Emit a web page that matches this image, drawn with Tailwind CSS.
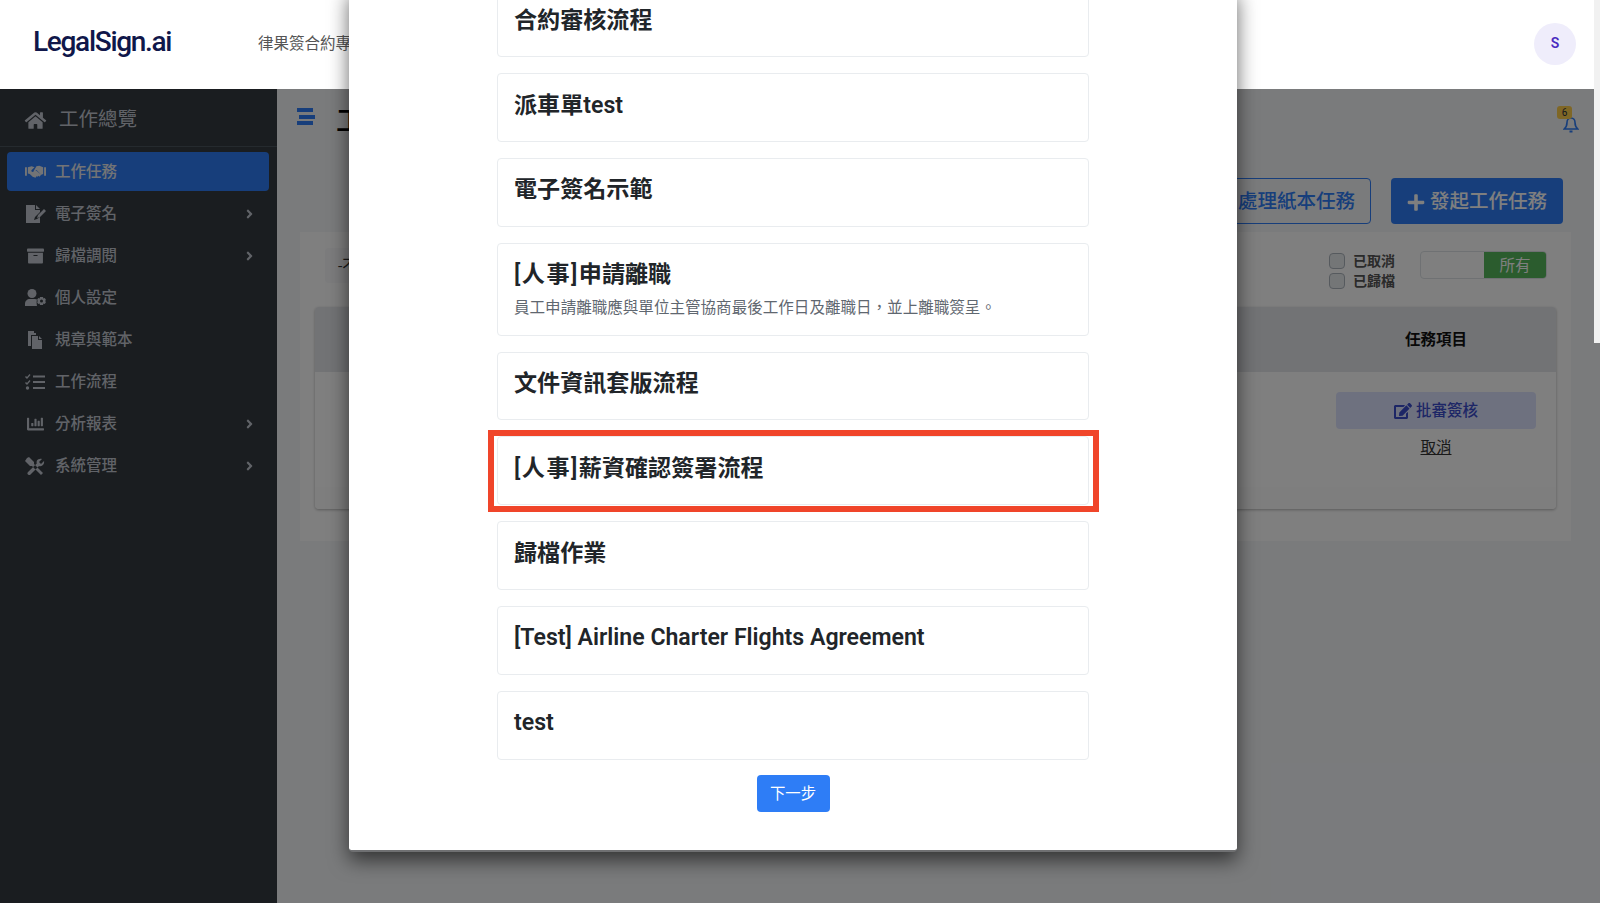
<!doctype html>
<html>
<head>
<meta charset="utf-8"/>
<meta name="viewport" content="width=device-width, initial-scale=1.0">
<title>LegalSign.ai</title>
<script src="https://cdn.jsdelivr.net/npm/@tailwindcss/browser@4"></script>
</head>
<body>
<div class="relative h-[903px] w-[1600px] overflow-hidden bg-white font-['Roboto','Noto_Sans_CJK_TC',sans-serif] text-[15.5px]">

	<!-- top bar stays above the backdrop -->
	<header class="relative z-20 flex h-[89px] items-center bg-white pr-[24px] pb-[2px] pl-[33px]">
		<div class="mb-[3px] w-[225px] text-[28px] leading-none font-medium tracking-[-1.3px] text-[#10174a]">LegalSign.ai</div>
		<div class="mt-[2px] text-[15.5px] whitespace-nowrap text-[#555]">律果簽合約專業版</div>
		<div class="ml-auto flex h-[42px] w-[42px] items-center justify-center rounded-full bg-[#efedfb] text-[14px] font-semibold text-[#4a2bc0]">S</div>
	</header>

	<div class="flex h-[814px]">
		<!-- sidebar -->
		<aside class="w-[277px] shrink-0 bg-[#343a40] font-medium text-[#c2c7d0]">
			<div class="flex h-[58px] items-center gap-[12px] border-b border-[#4b545c] pt-[5px] pl-[24px] text-[19.5px] font-normal">
				<svg class="h-[19px] w-[23px]" viewBox="0 0 576 512" fill="currentColor"><path d="M280.37 148.26L96 300.11V464a16 16 0 0 0 16 16l112.06-.29a16 16 0 0 0 15.92-16V368a16 16 0 0 1 16-16h64a16 16 0 0 1 16 16v95.64a16 16 0 0 0 16 16.05L464 480a16 16 0 0 0 16-16V300L295.67 148.26a12.19 12.19 0 0 0-15.3 0zM571.6 251.47L488 182.56V44.05a12 12 0 0 0-12-12h-56a12 12 0 0 0-12 12v72.61L318.47 43a48 48 0 0 0-61 0L4.34 251.47a12 12 0 0 0-1.6 16.9l25.5 31A12 12 0 0 0 45.15 301l235.22-193.74a12.19 12.19 0 0 1 15.3 0L530.9 301a12 12 0 0 0 16.9-1.6l25.5-31a12 12 0 0 0-1.7-16.93z"/></svg>
				<span>工作總覽</span>
			</div>
			<nav class="flex flex-col gap-[3px] pt-[5px] pr-[8px] pl-[7px]">
				<div class="flex h-[39px] items-center rounded-[4px] bg-[#2e7df6] pl-[18px] text-[#e6e8ec]">
					<svg class="mr-[9px] h-[16px] w-[21px]" viewBox="0 0 22 16" fill="currentColor"><path d="M0 3h2v9H0zM20 3h2v9h-2zM3 3l4-1 3 1-3 3c-1 1 0 2 1 2l3-2 6 5-1 1-1 1-1-1-1 1-1-.5-1 1.500-3-1-3-3-2-.5zM12 2l3-.5 4 1.500v7l-2 1-5-5-3 2 0-1z"/></svg>
					<span class="pt-[2px]">工作任務</span>
				</div>
				<div class="flex h-[39px] items-center pl-[18px]">
					<svg class="mr-[9px] h-[18px] w-[21px]" viewBox="0 0 21 18" fill="currentColor"><path d="M1 0h9v5h5v2l-5 5-1 3 3-1 3-2v6H1zM11 0l4 4h-4zM13 10l6-6 2 2-6 6-3 1z"/></svg>
					<span class="pt-[2px]">電子簽名</span>
					<svg class="mr-[16px] ml-auto h-[14px] w-[7px]" viewBox="0 0 256 512" fill="currentColor"><path d="M224.3 273l-136 136c-9.4 9.4-24.6 9.4-33.9 0l-22.6-22.6c-9.4-9.4-9.4-24.6 0-33.9l96.4-96.4-96.4-96.4c-9.4-9.4-9.4-24.6 0-33.9L54.3 103c9.4-9.4 24.6-9.4 33.9 0l136 136c9.5 9.4 9.5 24.6.1 34z"/></svg>
				</div>
				<div class="flex h-[39px] items-center pl-[18px]">
					<svg class="mr-[9px] h-[18px] w-[21px] px-[2px]" viewBox="0 0 512 512" fill="currentColor"><path d="M32 448c0 17.7 14.3 32 32 32h384c17.7 0 32-14.3 32-32V160H32v288zm160-212c0-6.6 5.4-12 12-12h104c6.6 0 12 5.4 12 12v8c0 6.6-5.400 12-12 12H204c-6.600 0-12-5.400-12-12v-8zM480 32H32C14.300 32 0 46.300 0 64v48c0 8.800 7.200 16 16 16h480c8.800 0 16-7.200 16-16V64c0-17.700-14.300-32-32-32z"/></svg>
					<span class="pt-[2px]">歸檔調閱</span>
					<svg class="mr-[16px] ml-auto h-[14px] w-[7px]" viewBox="0 0 256 512" fill="currentColor"><path d="M224.3 273l-136 136c-9.4 9.4-24.6 9.4-33.9 0l-22.6-22.6c-9.4-9.4-9.4-24.6 0-33.9l96.4-96.4-96.4-96.4c-9.4-9.4-9.4-24.6 0-33.9L54.3 103c9.4-9.4 24.6-9.4 33.9 0l136 136c9.5 9.4 9.5 24.6.1 34z"/></svg>
				</div>
				<div class="flex h-[39px] items-center pl-[18px]">
					<svg class="mr-[9px] h-[17px] w-[21px]" viewBox="0 0 21 17" fill="currentColor"><circle cx="7" cy="4.500" r="4.500"/><path d="M0 17v-2c0-3 2-5 5-5h5c.8 0 1.500.2 2 .5-.5 1.500-.5 4.500 0 6.500z"/><path fill-rule="evenodd" d="M15 8h3l.4 1.500 1.400-.5 1.200 2-1 1 1 1-1.200 2-1.400-.5L18 16h-3l-.4-1.500-1.400.5-1.200-2 1-1-1-1 1.200-2 1.400.5zM16.500 10.500a1.500 1.500 0 1 0 0 3 1.500 1.500 0 0 0 0-3z"/></svg>
					<span class="pt-[2px]">個人設定</span>
				</div>
				<div class="flex h-[39px] items-center pl-[18px]">
					<svg class="mr-[9px] h-[18px] w-[21px]" viewBox="0 0 21 18" fill="currentColor"><path d="M3 0h6v2h2v2H6v11H3zM7 5h6v4h4v9H7zM14 5l3 3h-3z"/></svg>
					<span class="pt-[2px]">規章與範本</span>
				</div>
				<div class="flex h-[39px] items-center pl-[18px]">
					<svg class="mr-[9px] h-[16px] w-[21px]" viewBox="0 0 21 16" fill="currentColor"><path d="M8 1.500h12v2H8zM8 7h12v2H8zM8 13h12v2H8zM2 3l2.500-3 1 1-3.500 4-2-2 1-1zM2 9l2.500-3 1 1-3.500 4-2-2 1-1z"/><circle cx="2.500" cy="14" r="1.700"/></svg>
					<span class="pt-[2px]">工作流程</span>
				</div>
				<div class="flex h-[39px] items-center pl-[18px]">
					<svg class="mr-[9px] h-[18px] w-[21px] px-[2px]" viewBox="0 0 512 512" fill="currentColor"><path d="M332.800 320h38.400c6.400 0 12.800-6.400 12.800-12.800V172.800c0-6.400-6.400-12.800-12.800-12.800h-38.400c-6.400 0-12.800 6.400-12.800 12.800v134.400c0 6.400 6.400 12.800 12.800 12.800zm96 0h38.400c6.400 0 12.800-6.400 12.800-12.800V76.800c0-6.400-6.400-12.800-12.800-12.800h-38.400c-6.400 0-12.800 6.400-12.800 12.800v230.400c0 6.400 6.400 12.800 12.800 12.800zm-288 0h38.400c6.400 0 12.800-6.400 12.800-12.800v-70.400c0-6.400-6.400-12.800-12.800-12.800h-38.400c-6.400 0-12.800 6.400-12.800 12.800v70.400c0 6.400 6.400 12.800 12.800 12.800zm96 0h38.400c6.400 0 12.800-6.400 12.800-12.800V108.800c0-6.400-6.400-12.800-12.800-12.800h-38.400c-6.400 0-12.800 6.400-12.800 12.800v198.400c0 6.400 6.400 12.800 12.800 12.800zM496 384H64V80c0-8.840-7.160-16-16-16H16C7.160 64 0 71.160 0 80v336c0 17.670 14.330 32 32 32h464c8.840 0 16-7.160 16-16v-32c0-8.840-7.160-16-16-16z"/></svg>
					<span class="pt-[2px]">分析報表</span>
					<svg class="mr-[16px] ml-auto h-[14px] w-[7px]" viewBox="0 0 256 512" fill="currentColor"><path d="M224.3 273l-136 136c-9.4 9.4-24.6 9.4-33.9 0l-22.6-22.6c-9.4-9.4-9.4-24.6 0-33.9l96.4-96.4-96.4-96.4c-9.4-9.4-9.4-24.6 0-33.9L54.3 103c9.4-9.4 24.6-9.4 33.9 0l136 136c9.5 9.4 9.5 24.6.1 34z"/></svg>
				</div>
				<div class="flex h-[39px] items-center pl-[18px]">
					<svg class="mr-[9px] h-[18px] w-[21px]" viewBox="0 0 21 18" fill="currentColor"><path d="M2 1l2-1 5 5 0 2 9 9-2 2-9-9-2 0-5-5zM19 4l-3 3-2-2 3-3c-2-.8-4 0-5 1.500-.5 1-.5 2-.2 3L3 15c-.8.8-.8 2 0 2.500.8.800 2 .800 2.500 0L14 9c1 .3 2 .3 3-.2C18.500 8 19.500 6 19 4z"/></svg>
					<span class="pt-[2px]">系統管理</span>
					<svg class="mr-[16px] ml-auto h-[14px] w-[7px]" viewBox="0 0 256 512" fill="currentColor"><path d="M224.3 273l-136 136c-9.4 9.4-24.6 9.4-33.9 0l-22.6-22.6c-9.4-9.4-9.4-24.6 0-33.9l96.4-96.4-96.4-96.4c-9.4-9.4-9.4-24.6 0-33.9L54.3 103c9.4-9.4 24.6-9.4 33.9 0l136 136c9.5 9.4 9.5 24.6.1 34z"/></svg>
				</div>
			</nav>
		</aside>

		<!-- page behind the dialog -->
		<main class="flex min-w-0 flex-1 flex-col bg-[#f4f6f9] pr-[29px] pl-[23px]">
			<div class="flex h-[89px] items-start pt-[19px]">
				<div class="-ml-[3px] flex w-[39px] flex-col gap-[2.500px]">
					<span class="h-[4px] w-[16px] bg-[#2e7df6]"></span>
					<span class="ml-[2px] h-[4px] w-[16px] bg-[#2e7df6]"></span>
					<span class="h-[4px] w-[16px] bg-[#2e7df6]"></span>
				</div>
				<div class="-mt-[4px] text-[28px] leading-[36px] font-medium text-black">工作任務</div>
				<div class="relative mt-[8px] mr-[-8px] ml-auto h-[18px] w-[20px] text-[#2e7df6]">
					<svg class="absolute top-0 left-[4px] h-[18px] w-[16px]" viewBox="0 0 16 18" fill="none" stroke="currentColor" stroke-width="1.600"><path d="M8 2c-2.500 0-4 2-4 4.500 0 3-1 5-2.800 6.500h13.600C13 11.500 12 9.500 12 6.500 12 4 10.500 2 8 2z"/><path d="M6.500 15.500h3" stroke-width="2"/></svg>
					<span class="absolute -top-[10px] -left-[2px] flex h-[13px] w-[15px] items-center justify-center rounded-[3px] bg-[#ffcf4d] text-[10px] text-[#1f2d3d]">6</span>
				</div>
			</div>

			<div class="flex h-[46px] justify-end gap-[20px] pr-[8px]">
				<button class="rounded-[4px] border-[1.500px] border-[#2e7df6] bg-transparent px-[15px] pt-[2px] text-[19.500px] font-medium text-[#2e7df6]">處理紙本任務</button>
				<button class="flex w-[172px] items-center justify-center gap-[5px] rounded-[4px] bg-[#2e7df6] pt-[2px] text-[19.500px] font-medium text-white">
					<svg class="h-[19px] w-[18px]" viewBox="0 0 448 512" fill="currentColor"><path d="M416 208H272V64c0-17.670-14.330-32-32-32h-32c-17.670 0-32 14.330-32 32v144H32c-17.670 0-32 14.330-32 32v32c0 17.670 14.330 32 32 32h144v144c0 17.670 14.330 32 32 32h32c17.670 0 32-14.330 32-32V304h144c17.670 0 32-14.330 32-32v-32c0-17.670-14.330-32-32-32z"/></svg>
					<span>發起工作任務</span>
				</button>
			</div>

			<section class="mt-[8px] h-[309px] bg-white px-[15px]">
				<div class="flex h-[75px] items-start">
					<div class="mt-[16px] ml-[10px] flex h-[35px] w-[180px] items-center rounded-[4px] bg-[#f8f9fa] pt-[2px] pl-[13px] text-[#333]">-不限-</div>
					<div class="mt-[21px] ml-auto flex flex-col gap-[4px] text-[14px] leading-[16px] font-semibold text-[#555]">
						<label class="flex items-center gap-[8px]"><span class="h-[16px] w-[16px] rounded-[4px] border border-[#adb5bd] bg-[#e9ecef]"></span>已取消</label>
						<label class="flex items-center gap-[8px]"><span class="h-[16px] w-[16px] rounded-[4px] border border-[#adb5bd] bg-[#e9ecef]"></span>已歸檔</label>
					</div>
					<div class="mt-[19px] mr-[9px] ml-[25px] flex h-[28px] w-[127px] overflow-hidden rounded-[4px] border border-[#dee2e6] bg-white">
						<span class="flex-1"></span>
						<span class="flex w-[62px] items-center justify-center bg-[#56b85c] pt-[4px] text-white">所有</span>
					</div>
				</div>
				<div class="flex h-[202px] flex-col overflow-hidden rounded-[4px] bg-white shadow-[0_1px_3px_rgba(0,0,0,0.3)]">
					<div class="flex h-[65px] items-center justify-end bg-[#e4e6ea] pt-[2px]">
						<span class="w-[240px] text-center font-bold text-[#111]">任務項目</span>
					</div>
					<div class="flex flex-1 justify-end">
						<div class="flex w-[240px] flex-col items-center pt-[20px]">
							<button class="flex h-[37px] w-[200px] items-center justify-center gap-[4px] rounded-[4px] bg-[#dde3ff] font-medium text-[#3a4ccc]">
								<svg class="h-[16px] w-[18px]" viewBox="0 0 576 512" fill="currentColor"><path d="M402.600 83.200l90.200 90.200c3.800 3.800 3.800 10 0 13.800L274.400 405.600l-92.800 10.300c-12.400 1.400-22.900-9.100-21.500-21.500l10.300-92.800L388.800 83.200c3.800-3.800 10-3.800 13.800 0zm162-22.900l-48.800-48.800c-15.200-15.200-39.900-15.200-55.200 0l-35.400 35.400c-3.800 3.800-3.800 10 0 13.800l90.200 90.200c3.800 3.800 10 3.800 13.800 0l35.400-35.400c15.200-15.300 15.200-40 0-55.200zM384 346.200V448H64V128h229.800c3.200 0 6.200-1.300 8.500-3.500l40-40c7.600-7.600 2.200-20.500-8.500-20.500H48C21.500 64 0 85.500 0 112v352c0 26.500 21.500 48 48 48h352c26.500 0 48-21.500 48-48V306.200c0-10.700-12.900-16-20.500-8.500l-40 40c-2.200 2.300-3.500 5.300-3.500 8.500z"/></svg>
								<span class="pt-[2px]">批審簽核</span>
							</button>
							<a class="mt-[8px] text-[#333] underline">取消</a>
						</div>
					</div>
					<div class="h-[22px] bg-[#fcfcfc]"></div>
				</div>
			</section>
		</main>
	</div>

	<!-- backdrop -->
	<div class="absolute inset-0 z-10 bg-black/50"></div>

	<!-- dialog, taller than the window so its top is cut off -->
	<div class="absolute bottom-[51px] left-[349px] z-30 flex w-[888px] flex-col items-center rounded-b-[4px] border-b-2 border-[#6f7072] bg-white pb-[38px] shadow-[0_8px_20px_rgba(0,0,0,0.6)]">
		<div class="flex w-[592px] flex-col gap-[16px] text-[#212529]">
			<div class="rounded-[4px] border-[1.500px] border-[#e9ecef] px-[16px] pt-[18.500px] pb-[14.500px]"><h5 class="mb-[7px] text-[23.100px] leading-[26.800px] font-semibold">合約審核流程</h5></div>
			<div class="rounded-[4px] border-[1.500px] border-[#e9ecef] px-[16px] pt-[18.500px] pb-[14.500px]"><h5 class="mb-[7px] text-[23.100px] leading-[26.800px] font-semibold">派車單test</h5></div>
			<div class="rounded-[4px] border-[1.500px] border-[#e9ecef] px-[16px] pt-[18.500px] pb-[14.500px]"><h5 class="mb-[7px] text-[23.100px] leading-[26.800px] font-semibold">電子簽名示範</h5></div>
			<div class="rounded-[4px] border-[1.500px] border-[#e9ecef] px-[16px] pt-[18.500px] pb-[14.500px]">
				<h5 class="mb-[7px] text-[23.100px] leading-[26.800px] font-semibold"><span class="tracking-[1.500px]">[人事]</span>申請離職</h5>
				<p class="text-[15.550px] leading-[24px] text-[#5f6770]">員工申請離職應與單位主管協商最後工作日及離職日，並上離職簽呈。</p>
			</div>
			<div class="rounded-[4px] border-[1.500px] border-[#e9ecef] px-[16px] pt-[18.500px] pb-[14.500px]"><h5 class="mb-[7px] text-[23.100px] leading-[26.800px] font-semibold">文件資訊套版流程</h5></div>
			<div class="relative rounded-[4px] border-[1.500px] border-[#e9ecef] px-[16px] pt-[18.500px] pb-[14.500px]">
				<h5 class="mb-[7px] text-[23.100px] leading-[26.800px] font-semibold"><span class="tracking-[1.500px]">[人事]</span>薪資確認簽署流程</h5>
				<span class="absolute -top-[7px] -right-[11px] -bottom-[8px] -left-[10px] border-[6px] border-[#f0452a]"></span>
			</div>
			<div class="rounded-[4px] border-[1.500px] border-[#e9ecef] px-[16px] pt-[18.500px] pb-[14.500px]"><h5 class="mb-[7px] text-[23.100px] leading-[26.800px] font-semibold">歸檔作業</h5></div>
			<div class="rounded-[4px] border-[1.500px] border-[#e9ecef] px-[16px] pt-[18.500px] pb-[14.500px]"><h5 class="mb-[7px] text-[23.100px] leading-[26.800px] font-semibold">[Test] Airline Charter Flights Agreement</h5></div>
			<div class="rounded-[4px] border-[1.500px] border-[#e9ecef] px-[16px] pt-[18.500px] pb-[14.500px]"><h5 class="mb-[7px] text-[23.100px] leading-[26.800px] font-semibold">test</h5></div>
		</div>
		<button class="mt-[15.500px] h-[37px] w-[73px] rounded-[4px] bg-[#2e7df6] pt-[2px] text-[15.400px] text-white">下一步</button>
	</div>

	<!-- window scrollbar thumb -->
	<div class="absolute top-0 right-0 z-40 h-[343px] w-[6px] bg-[#f1f1f1]"></div>
</div>
</body>
</html>
